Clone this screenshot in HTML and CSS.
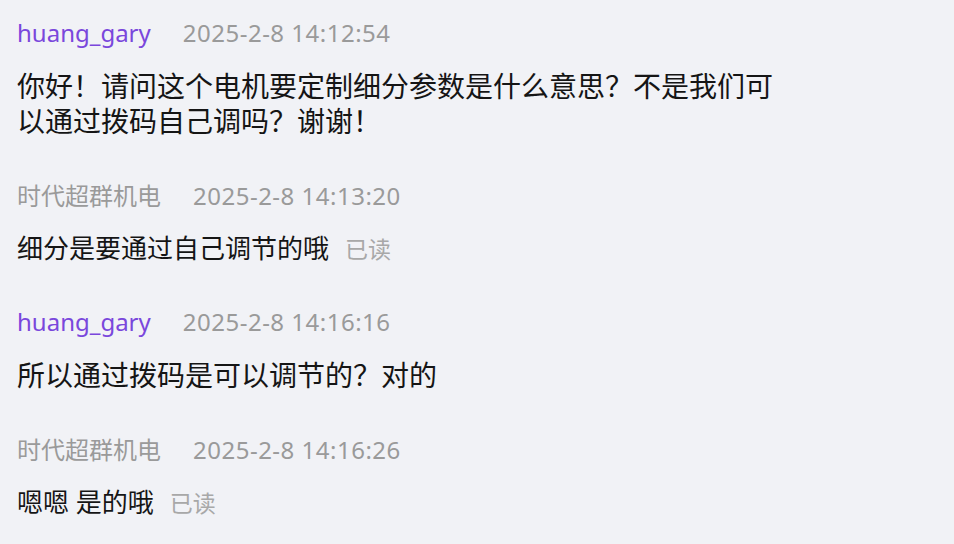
FILE: index.html
```html
<!DOCTYPE html>
<html lang="zh-CN">
<head>
<meta charset="utf-8">
<title>chat</title>
<link rel="stylesheet" href="styles.css">
</head>
<body>
<div class="chat">
  <div class="msg">
    <div class="head"><span class="name buyer">huang_gary</span><span class="time">2025-2-8 14:12:54</span></div>
    <div class="text buyer-text">你好！请问这个电机要定制细分参数是什么意思？不是我们可以通过拨码自己调吗？谢谢！</div>
  </div>
  <div class="msg">
    <div class="head"><span class="name seller">时代超群机电</span><span class="time">2025-2-8 14:13:20</span></div>
    <div class="text">细分是要通过自己调节的哦<span class="read">已读</span></div>
  </div>
  <div class="msg">
    <div class="head"><span class="name buyer">huang_gary</span><span class="time">2025-2-8 14:16:16</span></div>
    <div class="text buyer-text">所以通过拨码是可以调节的？对的</div>
  </div>
  <div class="msg">
    <div class="head"><span class="name seller">时代超群机电</span><span class="time">2025-2-8 14:16:26</span></div>
    <div class="text">嗯嗯 是的哦<span class="read">已读</span></div>
  </div>
</div>
</body>
</html>
```
FILE: styles.css
```css
html, body {
  margin: 0;
  padding: 0;
  background: #f1f2f6;
}
body {
  font-family: "Noto Sans", "Noto Sans CJK SC", sans-serif;
  color: #151515;
}
.chat {
  padding: 16px 0 0 17px;
}
.msg {
  margin-bottom: 40px;
}
.head {
  display: flex;
  align-items: center;
  height: 34px;
  line-height: 34px;
  font-size: 24px;
}
.name.buyer {
  color: #7a47dc;
  margin-right: 32px;
}
.name.seller {
  color: #9a9a9a;
  margin-right: 32px;
}
.time {
  color: #9a9a9a;
  letter-spacing: 0.5px;
}
.text {
  margin-top: 18px;
  font-size: 26px;
  line-height: 34px;
  max-width: 770px;
}
.buyer-text {
  margin-top: 19px;
  font-size: 28px;
  line-height: 35px;
}
.read {
  color: #a8a8a8;
  font-size: 23px;
  line-height: 0;
  margin-left: 16px;
}
```
